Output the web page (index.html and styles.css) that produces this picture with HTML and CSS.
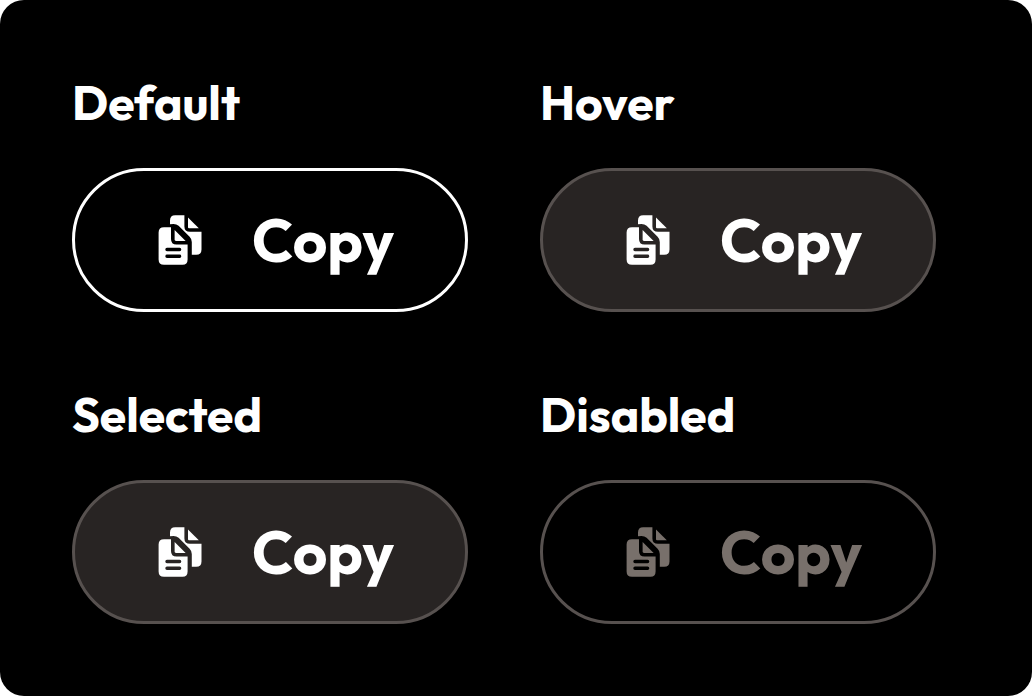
FILE: index.html
```html
<!DOCTYPE html>
<html lang="en">
<head>
<meta charset="utf-8">
<meta name="viewport" content="width=device-width, initial-scale=1">
<title>Copy button states</title>
<link rel="stylesheet" href="styles.css">
</head>
<body>
<svg class="symbols" aria-hidden="true">
  <symbol id="copy-icon" viewBox="0 0 72 72">
    <path d="M26 20.2V16.5Q26 11.2 31.2 11.2H40.4V22.5Q40.4 27.8 46 27.8H57.5V45.5Q57.5 50.8 52.2 50.8H47.8V38Q47.8 35 45.6 32.8L34.6 21.8Q32.6 20 29.5 20Z"/>
    <path d="M44 13.6L54.8 24.2H45Q44 24.2 44 23.2Z"/>
    <path fill-rule="evenodd" d="M20 23.2H27V35Q27 40.6 32.5 40.6H43.6V55.5Q43.6 60.8 38.5 60.8H20Q14.6 60.8 14.6 55.5V28.5Q14.6 23.2 20 23.2ZM23 43.8A1.7 1.7 0 0 0 23 47.2H35.6A1.7 1.7 0 0 0 35.6 43.8ZM23 50.6A1.7 1.7 0 0 0 23 54H35.6A1.7 1.7 0 0 0 35.6 50.6Z"/>
    <path d="M30.6 26L41.6 37H32Q30.6 37 30.6 35.6Z"/>
  </symbol>
</svg>
<main class="panel">
  <section class="state">
    <h2 class="title">Default</h2>
    <button class="copy" type="button"><svg class="icon" aria-hidden="true"><use href="#copy-icon"/></svg><span>Copy</span></button>
  </section>
  <section class="state">
    <h2 class="title">Hover</h2>
    <button class="copy copy-filled" type="button"><svg class="icon" aria-hidden="true"><use href="#copy-icon"/></svg><span>Copy</span></button>
  </section>
  <section class="state">
    <h2 class="title">Selected</h2>
    <button class="copy copy-filled" type="button" aria-pressed="true"><svg class="icon" aria-hidden="true"><use href="#copy-icon"/></svg><span>Copy</span></button>
  </section>
  <section class="state">
    <h2 class="title">Disabled</h2>
    <button class="copy" type="button" disabled><svg class="icon" aria-hidden="true"><use href="#copy-icon"/></svg><span>Copy</span></button>
  </section>
</main>
</body>
</html>
```
FILE: styles.css
```css
* {
  box-sizing: border-box;
}

body {
  margin: 0;
  background: #fff;
  font-family: Outfit, Lato, sans-serif;
}

.symbols {
  display: none;
}

.panel {
  display: grid;
  grid-template-columns: repeat(auto-fit, 396px);
  align-content: start;
  gap: 72px;
  min-height: 100vh;
  padding: 72px;
  border-radius: 24px;
  background: #000;
  color: #fff;
}

.state {
  display: flex;
  flex-direction: column;
  gap: 36px;
}

.title {
  margin: 0;
  font-size: 48px;
  font-weight: 700;
  line-height: 60px;
}

.copy {
  display: flex;
  align-items: center;
  gap: 36px;
  padding: 33px 69px;
  border: 3px solid #fff;
  border-radius: 72px;
  background: transparent;
  color: #fff;
  font-family: inherit;
  font-size: 60px;
  font-weight: 700;
  line-height: 72px;
}

.copy:hover,
.copy-filled {
  border-color: #57514f;
  background: #282423;
}

.copy:disabled {
  border-color: #57514f;
  background: transparent;
  color: #78706b;
}

.icon {
  flex: none;
  width: 72px;
  height: 72px;
  fill: currentColor;
}
```
